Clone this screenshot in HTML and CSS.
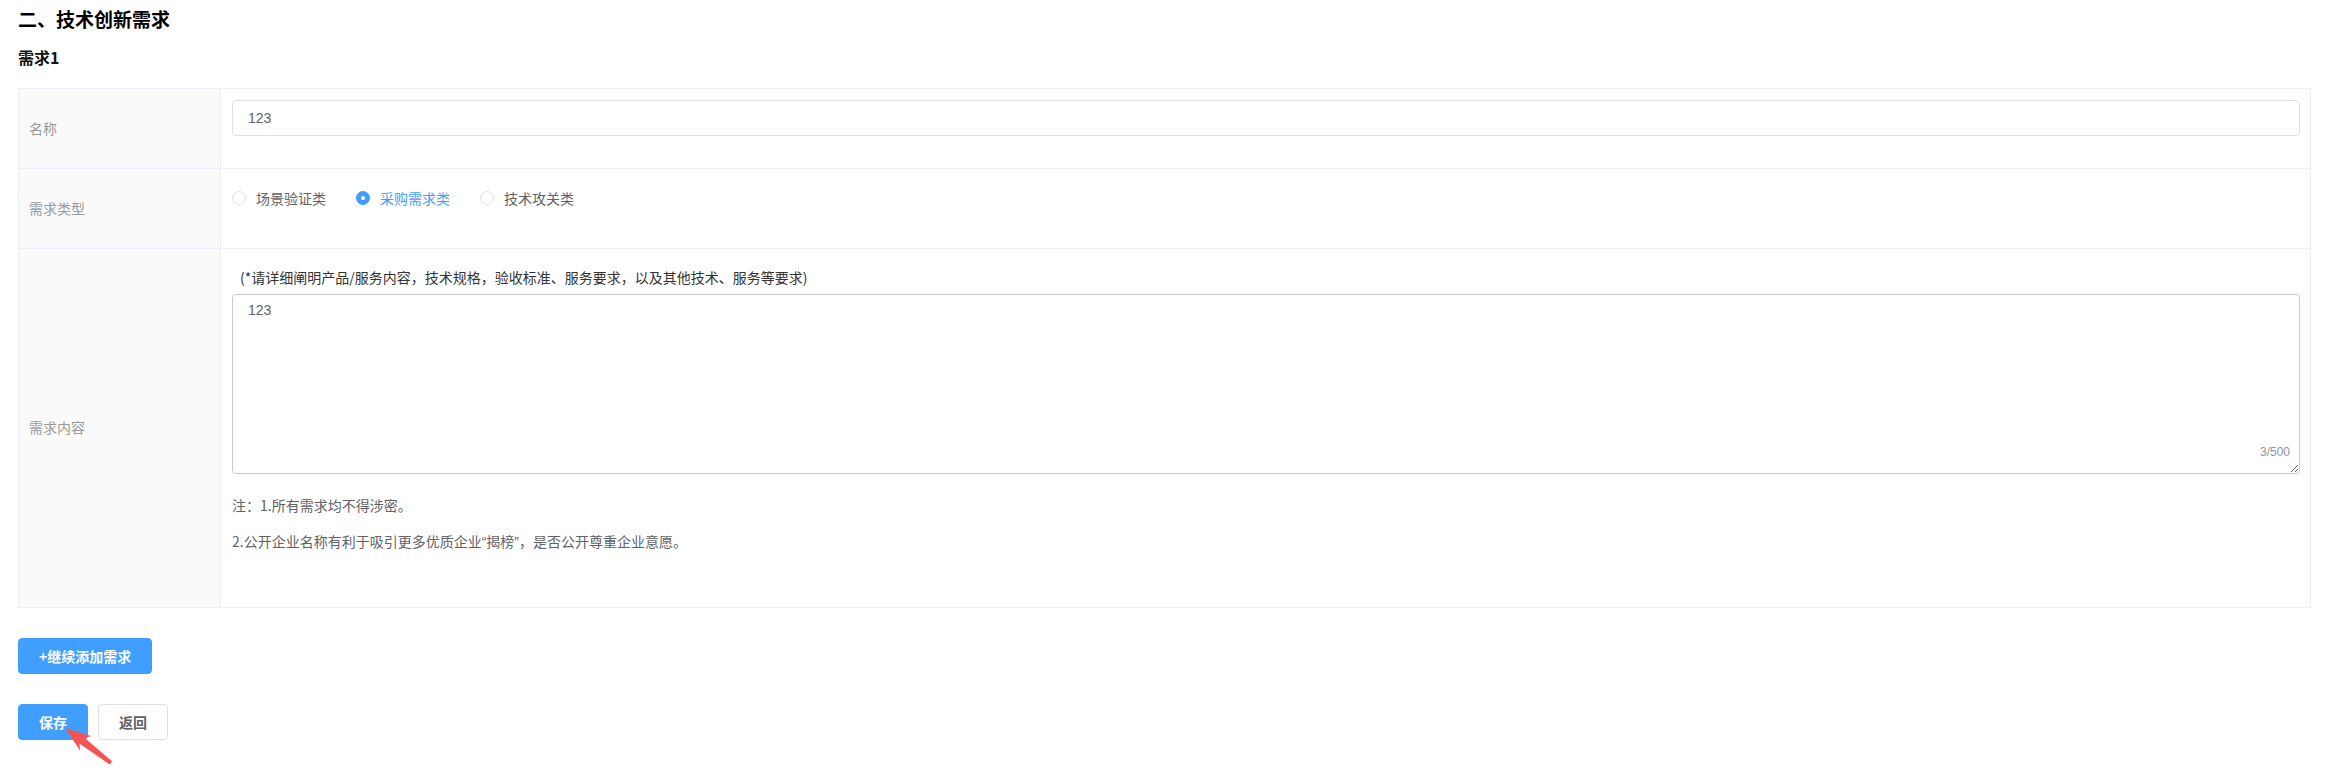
FILE: index.html
```html
<!DOCTYPE html>
<html lang="zh-CN">
<head>
<meta charset="utf-8">
<title>技术创新需求</title>
<link rel="stylesheet" href="styles.css">
</head>
<body>
<div class="page">
  <h2 class="title">二、技术创新需求</h2>
  <h3 class="sub">需求1</h3>
  <div class="table">
    <div class="label">名称</div>
    <div class="value v-name">
      <div class="input"><input type="text" value="123"></div>
    </div>

    <div class="label">需求类型</div>
    <div class="value v-type">
      <div class="radio-group">
        <label class="radio"><span class="radio-inner"></span><span class="radio-label">场景验证类</span></label>
        <label class="radio checked"><span class="radio-inner"></span><span class="radio-label">采购需求类</span></label>
        <label class="radio"><span class="radio-inner"></span><span class="radio-label">技术攻关类</span></label>
      </div>
    </div>

    <div class="label last">需求内容</div>
    <div class="value v-content last">
      <div class="hint">(*请详细阐明产品/服务内容，技术规格，验收标准、服务要求，以及其他技术、服务等要求)</div>
      <div class="textarea">
        <textarea>123</textarea>
        <span class="count">3/500</span>
      </div>
      <div class="notes">
        <p>注：1.所有需求均不得涉密。</p>
        <p>2.公开企业名称有利于吸引更多优质企业<span class="q">“</span>揭榜<span class="q">”</span>，是否公开尊重企业意愿。</p>
      </div>
    </div>
  </div>

  <div class="add-row">
    <button class="btn primary" type="button">+继续添加需求</button>
  </div>

  <div class="actions">
    <button class="btn primary" type="button">保存</button>
    <button class="btn" type="button">返回</button>
    <div class="arrow">
      <svg width="70" height="56" viewBox="0 0 70 56">
        <polygon points="7,6.7 33.5,15.2 26.2,16.6 54,40.2 51.6,43.4 21.4,22.6 22.3,30" fill="#f65454"/>
      </svg>
    </div>
  </div>
</div>
</body>
</html>
```

FILE: styles.css
```css
* { box-sizing: border-box; }

html, body {
  margin: 0;
  padding: 0;
  background: #ffffff;
}

body {
  font-family: "Noto Sans CJK SC", "Liberation Sans", sans-serif;
  font-size: 14px;
  color: #606266;
}

.page {
  padding: 7px 19px 37px 18px;
}

.title {
  margin: 0;
  font-size: 19px;
  line-height: 24px;
  font-weight: 700;
  color: #000000;
}

.sub {
  margin: 16px 0 0;
  font-size: 16px;
  line-height: 20px;
  font-weight: 700;
  color: #111111;
}

.table {
  margin-top: 21px;
  display: grid;
  grid-template-columns: 202px 1fr;
  border: 1px solid #ebeef5;
}

.label {
  display: flex;
  align-items: center;
  padding: 0 0 2px 10px;
  background: #fafafa;
  border-right: 1px solid #ebeef5;
  border-bottom: 1px solid #ebeef5;
  color: #999999;
  font-size: 14px;
  line-height: 20px;
}

.value {
  padding: 11px 10px 0 11px;
  border-bottom: 1px solid #ebeef5;
}

.label.last,
.value.last {
  border-bottom: none;
}

.v-name { padding-bottom: 32px; }
.v-type { padding-bottom: 34px; }
.v-content { padding-bottom: 54px; }

.input input {
  display: block;
  width: 100%;
  height: 36px;
  padding: 0 15px;
  border: 1px solid #dcdfe6;
  border-radius: 4px;
  font-family: "Liberation Sans", "Noto Sans CJK SC", sans-serif;
  font-size: 14px;
  color: #606266;
  background: #fff;
  outline: none;
}

.radio-group {
  display: flex;
  align-items: center;
  height: 34px;
  padding-top: 1px;
}

.radio {
  display: flex;
  align-items: center;
  margin-right: 30px;
  cursor: pointer;
}

.radio-inner {
  width: 14px;
  height: 14px;
  border: 1px solid #dcdfe6;
  border-radius: 50%;
  background: #fff;
  display: flex;
  align-items: center;
  justify-content: center;
}

.radio-label {
  padding-left: 10px;
  font-size: 14px;
  line-height: 20px;
  color: #606266;
}

.radio.checked .radio-inner {
  background: #409eff;
  border-color: #409eff;
}

.radio.checked .radio-inner::after {
  content: "";
  width: 4px;
  height: 4px;
  border-radius: 50%;
  background: #fff;
}

.radio.checked .radio-label {
  color: #409eff;
}

.hint {
  height: 34px;
  line-height: 34px;
  padding-left: 8px;
  font-size: 14px;
  color: #333333;
}

.textarea {
  position: relative;
}

.textarea textarea {
  display: block;
  width: 100%;
  height: 180px;
  padding: 5px 15px;
  border: 1px solid #c8cacf;
  border-radius: 4px;
  font-family: "Liberation Sans", "Noto Sans CJK SC", sans-serif;
  font-size: 14px;
  line-height: 21px;
  color: #606266;
  background: #fff;
  outline: none;
  resize: vertical;
}

.count {
  position: absolute;
  right: 10px;
  bottom: 12px;
  font-family: "Liberation Sans", sans-serif;
  font-size: 12px;
  line-height: 20px;
  color: #909399;
  background: #fff;
}

.notes {
  margin-top: 21px;
}

.notes p {
  margin: 0 0 15px;
  font-size: 14px;
  line-height: 21px;
  color: #606266;
}

.notes p:last-child {
  margin-bottom: 0;
}

.q {
  font-family: "Liberation Sans", sans-serif;
}

.add-row {
  margin-top: 30px;
}

.actions {
  position: relative;
  margin-top: 30px;
  display: flex;
  gap: 10px;
}

.btn {
  height: 36px;
  padding: 0 20px;
  border: 1px solid #dcdfe6;
  border-radius: 4px;
  background: #fff;
  font-family: inherit;
  font-size: 14px;
  line-height: 1;
  font-weight: 700;
  color: #606266;
  cursor: pointer;
}

.btn.primary {
  background: #409eff;
  border-color: #409eff;
  color: #ffffff;
}

.arrow {
  position: absolute;
  left: 40px;
  top: 17px;
  width: 70px;
  height: 56px;
  z-index: 5;
  overflow: visible;
  pointer-events: none;
}

.arrow svg {
  display: block;
  overflow: visible;
}
```
